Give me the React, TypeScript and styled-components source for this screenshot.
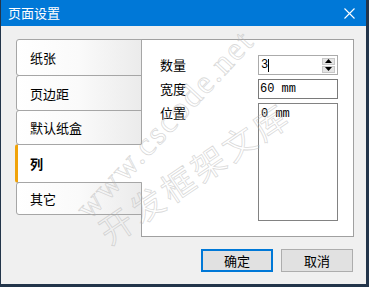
import React, { useState } from "react";
import styled, { createGlobalStyle } from "styled-components";

const GlobalStyle = createGlobalStyle`
  html, body {
    margin: 0;
    padding: 0;
    background: #ffffff;
  }
  body {
    font-family: "Noto Sans CJK SC", "Noto Sans", sans-serif;
  }
`;

const tabs = [
  { label: "纸张", height: 37 },
  { label: "页边距", height: 36 },
  { label: "默认纸盒", height: 35 },
  { label: "列", height: 39 },
  { label: "其它", height: 33 },
];

function App() {
  const [active, setActive] = useState(3);

  return (
    <>
      <GlobalStyle />
      <Window>
        <TitleBar>
          <Title>页面设置</Title>
          <CloseButton>
            <svg width="11" height="11" viewBox="0 0 11 11">
              <path d="M0.5 0.5 L10.5 10.5 M10.5 0.5 L0.5 10.5" stroke="#fff" strokeWidth="1.1" />
            </svg>
          </CloseButton>
        </TitleBar>

        <Body>
          <Main>
            <TabList>
              {tabs.map((t, i) => (
                <Tab
                  key={t.label}
                  $height={t.height}
                  $active={i === active}
                  $first={i === 0}
                  onClick={() => setActive(i)}
                >
                  {t.label}
                </Tab>
              ))}
            </TabList>

            <Panel>
              <FieldLabel>数量</FieldLabel>
              <Spinner>
                <SpinText>3</SpinText>
                <Caret />
                <SpinButtons>
                  <SpinButton>
                    <svg width="7" height="4" viewBox="0 0 7 4">
                      <path d="M3.5 0 L7 4 L0 4 Z" fill="#000" />
                    </svg>
                  </SpinButton>
                  <SpinButton>
                    <svg width="7" height="4" viewBox="0 0 7 4">
                      <path d="M0 0 L7 0 L3.5 4 Z" fill="#000" />
                    </svg>
                  </SpinButton>
                </SpinButtons>
              </Spinner>

              <FieldLabel>宽度</FieldLabel>
              <TextBox>60 mm</TextBox>

              <FieldLabel>位置</FieldLabel>
              <ListBox>0 mm</ListBox>
            </Panel>
          </Main>

          <Footer>
            <DialogButton $default>确定</DialogButton>
            <DialogButton>取消</DialogButton>
          </Footer>
        </Body>

        <Watermark $x={42} $y={106} $angle={-47} $size={33} $spacing={2}>
          www.cscode.net
        </Watermark>
        <Watermark $x={82} $y={148} $angle={-34} $size={33} $spacing={4}>
          开发框架文库
        </Watermark>
      </Window>
    </>
  );
}

const Window = styled.div`
  position: relative;
  width: 369px;
  height: 287px;
  box-sizing: border-box;
  display: flex;
  flex-direction: column;
  background: #f0f0f0;
  border-style: solid;
  border-color: #23354a;
  border-width: 0 3px 3px 1px;
  overflow: hidden;
`;

const TitleBar = styled.div`
  height: 26px;
  flex-shrink: 0;
  display: flex;
  align-items: center;
  justify-content: space-between;
  background: #0078d7;
  color: #ffffff;
  padding-left: 7px;
`;

const Title = styled.span`
  font-size: 13px;
  line-height: 26px;
`;

const CloseButton = styled.div`
  width: 32px;
  height: 26px;
  display: flex;
  align-items: center;
  justify-content: center;
  margin-right: 1px;
`;

const Body = styled.div`
  flex: 1;
  display: flex;
  flex-direction: column;
  padding: 13px 12px 0 15px;
`;

const Main = styled.div`
  display: flex;
  height: 198px;
`;

const TabList = styled.div`
  width: 126px;
  margin-right: -1px;
  display: flex;
  flex-direction: column;
  position: relative;
  z-index: 1;
`;

const Tab = styled.div<{ $height: number; $active?: boolean; $first?: boolean }>`
  box-sizing: border-box;
  height: ${(p) => p.$height}px;
  margin-top: ${(p) => (p.$first ? 0 : -1)}px;
  display: flex;
  align-items: center;
  font-size: 13px;
  color: #000;
  cursor: default;
  border: 1px solid #a6a6a6;
  border-radius: 3px 0 0 3px;
  padding-left: 13px;
  background: linear-gradient(to right, #ffffff 0%, #fafafa 50%, #ebebeb 100%);

  ${(p) =>
    p.$active &&
    `
    margin-left: -1px;
    border-left: 3px solid #f0a30a;
    border-right-color: #ffffff;
    background: #ffffff;
    font-weight: bold;
    padding-left: 12px;
  `}
`;

const Panel = styled.div`
  flex: 1;
  box-sizing: border-box;
  background: #ffffff;
  border: 1px solid #a0a0a0;
  padding: 15px 0 0 18px;
  display: grid;
  grid-template-columns: 98px 80px;
  grid-template-rows: 20px 20px 118px;
  row-gap: 4px;
  align-content: start;
`;

const FieldLabel = styled.div`
  font-size: 13px;
  line-height: 20px;
  color: #000;
`;

const inputText = `
  box-sizing: border-box;
  font-family: "Liberation Mono", "Courier New", monospace;
  font-size: 12px;
  color: #000;
  background: #ffffff;
`;

const Spinner = styled.div`
  ${inputText}
  border: 1px solid #ababab;
  display: flex;
  align-items: center;
  padding-left: 2px;
`;

const SpinText = styled.span`
  line-height: 18px;
`;

const Caret = styled.span`
  width: 1px;
  height: 13px;
  background: #000;
  margin-left: 0;
`;

const SpinButtons = styled.div`
  margin-left: auto;
  margin-right: 2px;
  display: flex;
  flex-direction: column;
  gap: 1px;
`;

const SpinButton = styled.div`
  width: 13px;
  height: 7px;
  box-sizing: border-box;
  background: #e5e5e5;
  border: 1px solid #c8c8c8;
  display: flex;
  align-items: center;
  justify-content: center;
`;

const TextBox = styled.div`
  ${inputText}
  border: 1px solid #7a7a7a;
  padding-left: 1px;
  line-height: 18px;
`;

const ListBox = styled.div`
  ${inputText}
  border: 1px solid #828282;
  padding: 3px 0 0 2px;
  line-height: 14px;
`;

const Footer = styled.div`
  display: flex;
  justify-content: flex-end;
  gap: 8px;
  margin-top: 12px;
  padding-right: 1px;
`;

const DialogButton = styled.div<{ $default?: boolean }>`
  box-sizing: border-box;
  width: 72px;
  height: 23px;
  display: flex;
  align-items: center;
  justify-content: center;
  font-size: 13px;
  color: #000;
  background: #e1e1e1;
  border: ${(p) => (p.$default ? "2px solid #0078d7" : "1px solid #adadad")};
`;

const Watermark = styled.span<{ $x: number; $y: number; $angle: number; $size: number; $spacing?: number }>`
  position: absolute;
  left: ${(p) => p.$x}px;
  top: ${(p) => p.$y}px;
  transform: rotate(${(p) => p.$angle}deg);
  transform-origin: center;
  font-family: "Liberation Serif", "Noto Sans CJK SC", serif;
  font-size: ${(p) => p.$size}px;
  letter-spacing: ${(p) => p.$spacing ?? 0}px;
  white-space: nowrap;
  color: transparent;
  -webkit-text-stroke: 0.8px rgba(180, 180, 180, 0.5);
  pointer-events: none;
  z-index: 5;
`;

export default App;
